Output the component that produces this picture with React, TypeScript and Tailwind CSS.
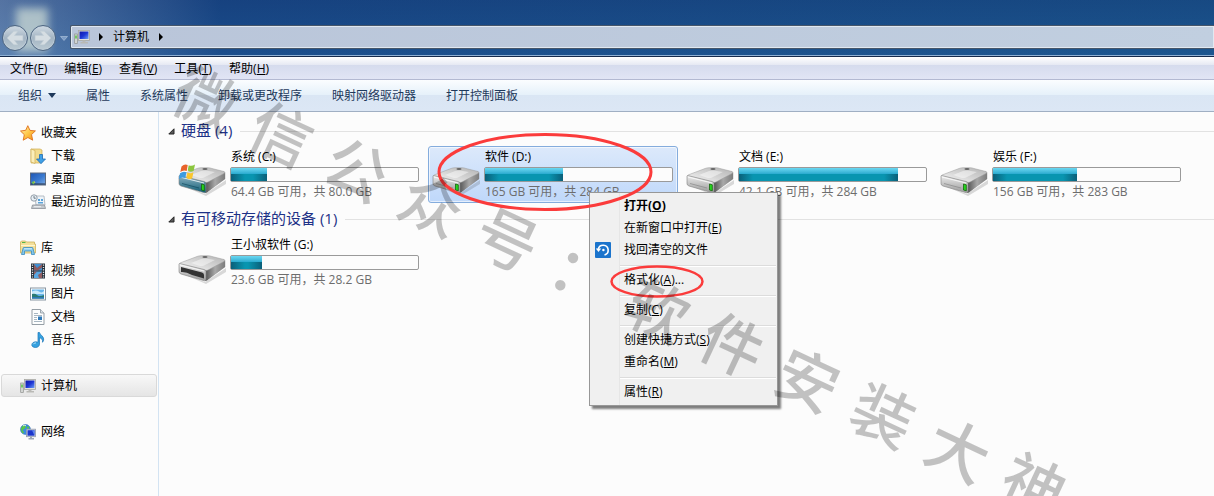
import type { ReactNode } from "react";

type DriveKind = "system" | "hard" | "removable";

interface Drive {
  name: string;
  kind: DriveKind;
  free: string;
  total: string;
  selected?: boolean;
}

const HARD_DRIVES: Drive[] = [
  { name: "系统 (C:)", kind: "system", free: "64.4", total: "80.0" },
  { name: "软件 (D:)", kind: "hard", free: "165", total: "284", selected: true },
  { name: "文档 (E:)", kind: "hard", free: "42.1", total: "284" },
  { name: "娱乐 (F:)", kind: "hard", free: "156", total: "283" },
];

const REMOVABLE_DRIVES: Drive[] = [
  { name: "王小叔软件 (G:)", kind: "removable", free: "23.6", total: "28.2" },
];

const WATERMARK = "微信公众号：软件安装大神";

function StarIcon() {
  return (
    <svg viewBox="0 0 16 16" className="size-4 shrink-0" aria-hidden="true">
      <defs>
        <linearGradient id="star" x1="0" y1="0" x2="1" y2="1">
          <stop offset="0" stopColor="#fff0b4" />
          <stop offset=".5" stopColor="#ffc84a" />
          <stop offset="1" stopColor="#f08a12" />
        </linearGradient>
      </defs>
      <path d="M7.8.7 10 5.4l5.4.5-3.9 3.7 1.2 5.6-4.800-2.700-4.700 2.700L4.300 9.700.5 6l5.200-.7z" fill="url(#star)" stroke="#e0701c" strokeWidth=".9" strokeLinejoin="round" />
    </svg>
  );
}

function DownloadIcon() {
  return (
    <svg viewBox="0 0 16 16" className="size-4 shrink-0" aria-hidden="true">
      <path d="M1 1h9l2 1v12l-2 1H1z" fill="#f3dc8e" stroke="#cfae55" strokeWidth=".7" />
      <path d="M1 1l4 1.500v13L1 14z" fill="#fbeeb9" stroke="#cfae55" strokeWidth=".7" />
      <path d="M9.500 6.500h3V11h3L11 15.700 6.500 11h3z" fill="#3fa0e6" stroke="#1f6cb4" strokeWidth=".8" />
    </svg>
  );
}

function DesktopIcon() {
  return (
    <svg viewBox="0 0 16 16" className="size-4 shrink-0" aria-hidden="true">
      <defs>
        <linearGradient id="desk" x1="0" y1="0" x2="1" y2="1">
          <stop offset="0" stopColor="#1e56b4" />
          <stop offset=".55" stopColor="#3b7ad0" />
          <stop offset="1" stopColor="#7eaee6" />
        </linearGradient>
      </defs>
      <rect x=".5" y="2" width="15" height="12" fill="url(#desk)" stroke="#5c6a80" />
      <path d="M1 12.500h14v1H1z" fill="#26324a" />
      <path d="M1.500 11.500l2-1.500 1.500 1.500-1.500 2z" fill="#6fc04e" />
      <path d="M4 10l1.500 1.200L4.500 12z" fill="#f6d250" />
    </svg>
  );
}

function RecentIcon() {
  return (
    <svg viewBox="0 0 16 16" className="size-4 shrink-0" aria-hidden="true">
      <path d="M5 2h9l1 9H6z" fill="#eef3f8" stroke="#a6afb8" strokeWidth=".8" />
      <path d="M8 5h2v2H8zM11 5h2v2h-2zM8 8h5v1.500H8z" fill="#5aa3d8" />
      <path d="M2.500 11h12l1 3.500H1.500z" fill="#c4c9ce" stroke="#8b9197" strokeWidth=".8" />
      <path d="M4 12.700h7" stroke="#eef0f2" />
      <circle cx="4" cy="4" r="3.200" fill="#e8f0f6" stroke="#8c969f" strokeWidth=".9" />
      <path d="M4 2v2.200h1.800" fill="none" stroke="#57626c" strokeWidth=".8" />
    </svg>
  );
}

function LibraryIcon() {
  return (
    <svg viewBox="0 0 16 16" className="size-4 shrink-0" aria-hidden="true">
      <path d="M.5 2l1-1h4l1 1h8v2h1v9H.5z" fill="#f4e09a" stroke="#cdb15c" strokeWidth=".8" />
      <path d="M2 2.500h3.500" stroke="#52b74a" />
      <path d="M1 5.500h14" stroke="#fff6cf" />
      <path d="M3 8.500q0-1 1-1h8q1 0 1 1l1.500 6h-3v-3.500h-7v3.500h-3z" fill="#82c7ec" stroke="#3c8dc0" strokeWidth=".8" />
      <path d="M4 8.800h8" stroke="#d6f0fc" />
    </svg>
  );
}

function VideoIcon() {
  return (
    <svg viewBox="0 0 16 16" className="size-4 shrink-0" aria-hidden="true">
      <rect x="1" y=".5" width="14" height="15" fill="#26303a" />
      <rect x="4" y="1" width="8" height="6.500" fill="#3f8fd2" />
      <rect x="4" y="8.500" width="8" height="6.500" fill="#57a7e2" />
      <path d="M4 1l3 4 5-4v3.500L8 7.500H4zM4 8.500h3L4 12zM12 9l-4 3 1 3h3z" fill="#a04c42" opacity=".8" />
      <path d="M2.500 1.500v13M13.500 1.500v13" stroke="#dfe6ea" strokeWidth="1.300" strokeDasharray="1.200 1.200" />
    </svg>
  );
}

function PictureIcon() {
  return (
    <svg viewBox="0 0 16 16" className="size-4 shrink-0" aria-hidden="true">
      <rect x=".5" y="2" width="15" height="12" fill="#fff" stroke="#8795a1" />
      <rect x="2" y="3.500" width="12" height="9" fill="#69b5ea" />
      <path d="M2 5.500q4-2 7 0t5-.5v3H2z" fill="#c9e9fa" />
      <path d="M2 8q3-1 5 1t7 0v3.500H2z" fill="#2b7a72" />
      <path d="M2 11h12v1.500H2z" fill="#2d78b8" />
    </svg>
  );
}

function DocumentIcon() {
  return (
    <svg viewBox="0 0 16 16" className="size-4 shrink-0" aria-hidden="true">
      <path d="M2 .5h8.500L14 4v11.500H2z" fill="#fdfefe" stroke="#8a949c" strokeWidth=".9" />
      <path d="M10.500.5V4H14" fill="#dbe3e8" stroke="#8a949c" strokeWidth=".8" />
      <path d="M4 4.500h4M4 6.500h8M4 8.500h3M4 10.500h3M4 12.500h8" stroke="#93a5b2" strokeWidth=".8" />
      <rect x="8" y="7.500" width="4" height="3.500" fill="#2f79b8" />
    </svg>
  );
}

function MusicIcon() {
  return (
    <svg viewBox="0 0 16 16" className="size-4 shrink-0" aria-hidden="true">
      <path d="M8 .5h1.500c.5 2.500 4 3.500 4.200 6.500.1 1.500-.6 2.600-1.200 3.300.4-2.600-.8-4-3-4.500V12c0 2-1.600 3.500-4 3.500S1.800 14.300 1.800 13c0-1.800 1.700-3.200 3.900-3.200.9 0 1.700.2 2.300.5z" fill="#36a2e0" stroke="#1b76b8" strokeWidth=".7" />
      <path d="M3.200 12.300q.7-1.500 2.800-1.400" fill="none" stroke="#b5e3fa" />
    </svg>
  );
}

function ComputerIcon() {
  return (
    <svg viewBox="0 0 16 16" className="size-4 shrink-0" aria-hidden="true">
      <defs>
        <linearGradient id="screen" x1="0" y1="0" x2="1" y2="1">
          <stop offset="0" stopColor="#1018a8" />
          <stop offset=".5" stopColor="#1c34d4" />
          <stop offset="1" stopColor="#6fa0f4" />
        </linearGradient>
      </defs>
      <rect x="4.500" y="1.500" width="11" height="10" fill="#e2e2dc" stroke="#a7a7a2" strokeWidth=".8" />
      <rect x="5.500" y="2.500" width="9" height="7.500" fill="url(#screen)" />
      <path d="M8.500 11.500h3V13h2.500v1.500H6.500V13h2z" fill="#b9b9b5" />
      <rect x=".7" y="5" width="2.600" height="9.500" fill="#d5d8d5" stroke="#8d908d" strokeWidth=".7" />
      <path d="M2 6.500v3" stroke="#4bc436" strokeWidth="1.400" />
    </svg>
  );
}

function NetworkIcon() {
  return (
    <svg viewBox="0 0 16 16" className="size-4 shrink-0" aria-hidden="true">
      <circle cx="5.500" cy="5.500" r="5" fill="#3b8be0" stroke="#2563a8" strokeWidth=".5" />
      <path d="M2 2.500q2.500-2 4-.7L5 4.500 2.500 6 4 8.500 3 9.500Q-.5 6 2 2.500zM7.500 2l2 1.500-1 1.500-2-1z" fill="#58c648" />
      <path d="M3 1.800q2-1 3 0" stroke="#d4f5e4" fill="none" />
      <rect x="6.500" y="5.200" width="9" height="7.500" fill="#d9dde6" stroke="#8e98ac" strokeWidth=".8" />
      <rect x="7.500" y="6.200" width="7" height="5.500" fill="#1c36cc" />
      <path d="M12 6.200h2.500v5.500z" fill="#5f86ee" />
      <path d="M10 12.700h2v1.200h2v1.500H8.500v-1.500H10z" fill="#9fa8b6" />
    </svg>
  );
}

function DriveIcon({ kind, id }: { kind: DriveKind; id: string }) {
  return (
    <svg viewBox="0 0 50 36" className="h-9 w-[50px] shrink-0" aria-hidden="true">
      <defs>
        <linearGradient id={`${id}-top`} x1="0" y1="1" x2="1" y2="0">
          <stop offset="0" stopColor="#fafafa" />
          <stop offset=".5" stopColor="#d4d4d4" />
          <stop offset="1" stopColor="#b4b4b4" />
        </linearGradient>
        <linearGradient id={`${id}-side`} x1="0" y1="0" x2="1" y2="0">
          <stop offset="0" stopColor="#4f4f4f" />
          <stop offset=".5" stopColor="#a8a8a8" />
          <stop offset="1" stopColor="#7c7c7c" />
        </linearGradient>
        <linearGradient id={`${id}-front`} x1="0" y1="0" x2="0" y2="1">
          <stop offset="0" stopColor={kind === "system" ? "#8fb4c4" : "#ececec"} />
          <stop offset="1" stopColor={kind === "system" ? "#0f5c74" : "#9a9a9a"} />
        </linearGradient>
      </defs>
      <path d="M3 22l24 9 21-14v4L28 33z" fill="#000" opacity=".14" />
      <path d="M27 18l19-9.500q1.200.4 1.200 2V16L29 29.500q-1 .6-2 .3z" fill={`url(#${id}-side)`} />
      <path d="M2 12L19 5.500q2-.8 4-.8h7q2 0 4 .8l12 3q1.800.8 0 2L30 19q-1.500.8-3.500.2L3 13.500q-2-.7-1-1.500z" fill={`url(#${id}-top)`} stroke="#9a9a9a" strokeWidth=".5" />
      <path d="M13 12l10-4q2-.7 5-.5l9 1.500-11 5.500q-2 1-5 .3z" fill="#fff" opacity=".45" />
      <path d="M1 13q0-.8 1.500-.3L26 18.500q2 .5 2 2v7.700q0 2-1.600 1.600L3 23q-2-.6-2-2.500z" fill={`url(#${id}-front)`} stroke="#808080" strokeWidth=".6" />
      <path d="M2 14L26 20" stroke="#fff" strokeWidth="1" opacity=".8" />
      {kind === "removable" ? (
        <path d="M3 16l21 5.500q2 .6 2 2.500v3.500L14 24Q8 20.500 3 21z" fill="#333" />
      ) : (
        <>
          <path d="M4 20.500l17 4.500" stroke={kind === "system" ? "#0b4458" : "#808080"} strokeWidth="1" opacity=".6" />
          <path d="M23.500 21l2.800.8v6l-2.800-.8z" fill="#25d51d" stroke="#16650f" strokeWidth=".8" />
        </>
      )}
      <ellipse cx="27" cy="6" rx="2.600" ry=".9" fill="#666" />
      {kind === "system" && (
        <g>
          <path d="M3.500 3.500Q6.500.5 9.700 2L8.700 8Q5.500 6.500 2.300 9z" fill="#e8632b" />
          <path d="M10.700 2.300q3 1.300 6.300-.8l-1.300 6.300q-3 1.800-6-.2z" fill="#8cc63f" />
          <path d="M2 10.200q3.200-2.500 6.400-1L7.300 15Q4 13.500.8 16z" fill="#3d9be0" />
          <path d="M9.400 9.500q3 1.600 6-.2l-1.200 6q-3 1.800-5.900-.2z" fill="#fbc62d" />
        </g>
      )}
    </svg>
  );
}

function DriveTile({ drive, id }: { drive: Drive; id: string }) {
  const total = parseFloat(drive.total);
  const used = ((total - parseFloat(drive.free)) / total) * 100;
  return (
    <button
      type="button"
      aria-pressed={!!drive.selected}
      className={`flex h-[57px] w-[250px] items-start rounded-[3px] border text-left ${
        drive.selected
          ? "border-[#84acdd] bg-linear-to-b from-[#dce9fb] to-[#bfd8fa] ring-1 ring-white/60 ring-inset"
          : "border-transparent"
      }`}
    >
      <span className="mt-4 ml-[3px] flex shrink-0">
        <DriveIcon kind={drive.kind} id={id} />
      </span>
      <span className="ml-0.5 flex flex-col">
        <span className="ml-px h-5 text-[12px] leading-5 text-black">{drive.name}</span>
        <span
          role="meter"
          aria-label={drive.name}
          aria-valuenow={Math.round(used)}
          className="flex h-[15px] w-[189px] rounded-[2px] border border-[#9a9a9a] bg-[#fcfcfc]"
        >
          <span
            className="flex h-full flex-col justify-end bg-linear-to-b from-[#6ad8f2] to-[#1fa6cc] to-50%"
            style={{ width: `${used}%` }}
          >
            <span className="block h-[7px] bg-[linear-gradient(90deg,#0a5f79,#0895b0_14px,#0895b0_calc(100%-14px),#0a5f79)]" />
          </span>
        </span>
        <span className="ml-px text-[12px] leading-5 text-[#6d6d6d]">
          {drive.free} GB 可用，共 {drive.total} GB
        </span>
      </span>
    </button>
  );
}

function DriveGroup({ title, drives, id }: { title: string; drives: Drive[]; id: string }) {
  return (
    <section>
      <div className="flex h-[30px] items-center">
        <svg viewBox="0 0 7 7" className="mr-1.5 size-[7px]" aria-hidden="true">
          <path d="M6 .8V6H.8z" fill="#595959" stroke="#262626" />
        </svg>
        <h2 className="pb-0.5 text-[15px] leading-5 text-[#1e3287]">{title}</h2>
        <span className="ml-2 h-px flex-1 bg-[#e2e2e2]" />
      </div>
      <div className="mb-px ml-1.5 flex flex-wrap gap-1">
        {drives.map((drive, i) => (
          <DriveTile key={drive.name} drive={drive} id={`${id}${i}`} />
        ))}
      </div>
    </section>
  );
}

function NavItem({ icon, label, nested, current }: { icon: ReactNode; label: string; nested?: boolean; current?: boolean }) {
  return (
    <li>
      <a
        href="#"
        aria-current={current ? "page" : undefined}
        className={`mx-px flex h-[23px] items-center gap-[5px] rounded-[3px] border ${nested ? "pl-7" : "pl-[18px]"} ${
          current ? "border-[#d9d9d9] bg-linear-to-b from-[#f8f8f8] to-[#e5e5e5]" : "border-transparent"
        }`}
      >
        {icon}
        <span>{label}</span>
      </a>
    </li>
  );
}

function MenuItem({ text, accel, suffix, bold, icon }: { text: string; accel?: string; suffix?: string; bold?: boolean; icon?: ReactNode }) {
  return (
    <button type="button" role="menuitem" className={`flex h-[22px] w-full items-center text-left ${bold ? "font-bold" : ""}`}>
      <span className="flex w-[34px] shrink-0 pl-[5px]">{icon}</span>
      <span>
        {text}
        {accel && (
          <>
            (<u>{accel}</u>)
          </>
        )}
        {suffix}
      </span>
    </button>
  );
}

function MenuSeparator() {
  return (
    <div role="separator" className="flex h-2 items-center pt-0.5">
      <span className="mr-px ml-[30px] h-0.5 flex-1 border-t border-[#dcdcdc] bg-white" />
    </div>
  );
}

function ContextMenu() {
  return (
    <div
      role="menu"
      className="absolute top-[192px] left-[589px] w-[189px] border border-[#979797] bg-[#f0f0f0] bg-linear-to-r from-[#f0f0f0] from-[29px] via-[#dcdcdc] via-[29px] to-[#f0f0f0] to-[30px] py-[2px] shadow-[3px_3px_2px_rgba(0,0,0,0.5)]"
    >
      <MenuItem text="打开" accel="O" bold />
      <MenuItem text="在新窗口中打开" accel="E" />
      <MenuItem
        text="找回清空的文件"
        icon={
          <svg viewBox="0 0 16 16" className="size-4" aria-hidden="true">
            <rect width="16" height="16" rx="1" fill="#1b74cc" />
            <path d="M3.300 7A5 5 0 1 1 9.500 13" fill="none" stroke="#fff" strokeWidth="1.600" />
            <path d="M.8 6.500h5.400L3.500 10z" fill="#fff" />
            <circle cx="8.400" cy="8" r="1.200" fill="#fff" />
          </svg>
        }
      />
      <MenuSeparator />
      <MenuItem text="格式化" accel="A" suffix="..." />
      <MenuSeparator />
      <MenuItem text="复制" accel="C" />
      <MenuSeparator />
      <MenuItem text="创建快捷方式" accel="S" />
      <MenuItem text="重命名" accel="M" />
      <MenuSeparator />
      <MenuItem text="属性" accel="R" />
    </div>
  );
}

function NavButton({ label, back }: { label: string; back?: boolean }) {
  return (
    <button
      type="button"
      aria-label={label}
      className="flex size-[26px] items-center justify-center rounded-full border border-[#4d6581] bg-linear-to-b from-[#d0dae3] via-[#a3b4c3] via-50% to-[#bccbd3] ring-1 ring-[#c2d0dd]/70 ring-inset"
    >
      <svg viewBox="0 0 16 16" className={back ? "size-[18px]" : "size-[18px] rotate-180"} aria-hidden="true">
        <path d="M1 8l6-6h3.500L7.500 5.800H15v4.400H7.500L10.500 14H7z" fill="#d6dee3" stroke="#c3ced6" strokeWidth=".5" />
      </svg>
    </button>
  );
}

function TitleBar() {
  return (
    <header className="relative flex h-[57px] items-end border-b border-[#14294b] bg-linear-to-r from-[#6d88b2] via-[#1a4684] via-[220px] to-[#1b5088]">
      <span className="absolute inset-0 bg-linear-to-b from-[#0c3572]/25 to-[#2370ac]/20" />
      <span className="absolute top-2 left-4 h-11 w-8 bg-[#d5e2d9]/70 blur-[4px]" />
      <div className="relative flex h-[31px] w-full items-start border-b border-[#8fb0d4]">
        <div className="flex w-[70px] shrink-0 items-center pl-0.5">
          <div className="flex gap-0.5">
            <NavButton label="后退" back />
            <NavButton label="前进" />
          </div>
          <svg viewBox="0 0 8 5" className="ml-1 h-[5px] w-2" aria-hidden="true">
            <path d="M.5.500h7L4 4.500z" fill="#7d9dc6" stroke="#b5c9e0" strokeWidth=".6" />
          </svg>
        </div>
        <nav className="flex h-6 flex-1 items-center rounded-l-[2px] border border-r-0 border-[#46566a] bg-linear-to-r from-[#b9c5d9] to-[#c1cfe0] pl-[3px] ring-1 ring-[#e8eff5]/80 ring-inset" aria-label="地址">
          <ComputerIcon />
          <svg viewBox="0 0 4 8" className="ml-[9px] h-2 w-1" aria-hidden="true">
            <path d="M0 0l4 4-4 4z" />
          </svg>
          <button type="button" className="ml-2.5 text-[12px] leading-5">计算机</button>
          <svg viewBox="0 0 4 8" className="ml-2.5 h-2 w-1" aria-hidden="true">
            <path d="M0 0l4 4-4 4z" />
          </svg>
        </nav>
      </div>
    </header>
  );
}

const MENUS: [string, string][] = [
  ["文件", "F"],
  ["编辑", "E"],
  ["查看", "V"],
  ["工具", "T"],
  ["帮助", "H"],
];

export default function App() {
  return (
    <div className="relative flex min-h-screen flex-col overflow-hidden bg-[#fcfcfc] font-['Open_Sans','Noto_Sans_CJK_SC',sans-serif] text-[12px] leading-5 text-black">
      <TitleBar />

      <div className="flex h-[23px] items-end gap-[17px] border-b border-[#b3b9d2] bg-[linear-gradient(180deg,#fff,#e6e9f3_35%,#d5dbed_36%,#e1e5f5)] pl-2.5">
        {MENUS.map(([label, key]) => (
          <button key={key} type="button">
            {label}(<u>{key}</u>)
          </button>
        ))}
      </div>

      <div className="flex h-8 items-center gap-[30px] border-b border-[#a0afc3] bg-[linear-gradient(180deg,#fbfdff,#e6f1fa_47%,#dae6f4_48%,#dce7f5)] pl-[18px] text-[#1e395b]">
        <button type="button" className="flex items-center gap-1.5">
          组织
          <svg viewBox="0 0 8 5" className="h-[5px] w-2" aria-hidden="true">
            <path d="M0 0h8L4 5z" fill="#1e395b" />
          </svg>
        </button>
        <button type="button">属性</button>
        <button type="button">系统属性</button>
        <button type="button">卸载或更改程序</button>
        <button type="button">映射网络驱动器</button>
        <button type="button">打开控制面板</button>
      </div>

      <div className="flex flex-1">
        <nav className="w-[159px] shrink-0 border-r border-[#d3e3f2] pt-[9px]" aria-label="导航">
          <ul className="mb-[23px]">
            <NavItem icon={<StarIcon />} label="收藏夹" />
            <NavItem icon={<DownloadIcon />} label="下载" nested />
            <NavItem icon={<DesktopIcon />} label="桌面" nested />
            <NavItem icon={<RecentIcon />} label="最近访问的位置" nested />
          </ul>
          <ul className="mb-[23px]">
            <NavItem icon={<LibraryIcon />} label="库" />
            <NavItem icon={<VideoIcon />} label="视频" nested />
            <NavItem icon={<PictureIcon />} label="图片" nested />
            <NavItem icon={<DocumentIcon />} label="文档" nested />
            <NavItem icon={<MusicIcon />} label="音乐" nested />
          </ul>
          <ul className="mb-[23px]">
            <NavItem icon={<ComputerIcon />} label="计算机" current />
          </ul>
          <ul>
            <NavItem icon={<NetworkIcon />} label="网络" />
          </ul>
        </nav>

        <main className="min-w-0 flex-1 pt-1 pl-[9px]">
          <DriveGroup title="硬盘 (4)" drives={HARD_DRIVES} id="hdd" />
          <DriveGroup title="有可移动存储的设备 (1)" drives={REMOVABLE_DRIVES} id="usb" />
        </main>
      </div>

      <ContextMenu />

      <svg className="pointer-events-none absolute top-[132px] left-[436px] h-[80px] w-[218px]" viewBox="0 0 218 80" aria-hidden="true">
        <ellipse cx="109" cy="40" rx="106" ry="37.500" fill="none" stroke="#fb3b3b" strokeWidth="3" />
      </svg>
      <svg className="pointer-events-none absolute top-[264px] left-[609px] h-[35px] w-[96px]" viewBox="0 0 96 35" aria-hidden="true">
        <ellipse cx="48" cy="17.500" rx="45.500" ry="15" fill="none" stroke="#fb3b3b" strokeWidth="2.500" />
      </svg>

      <div className="pointer-events-none absolute top-[250px] left-[122px] flex rotate-[25deg] text-[62px] leading-[84px] font-medium text-black/23">
        {[...WATERMARK].map((char, i) => (
          <span key={i} className="w-[83px] text-center">
            {char}
          </span>
        ))}
      </div>
    </div>
  );
}
